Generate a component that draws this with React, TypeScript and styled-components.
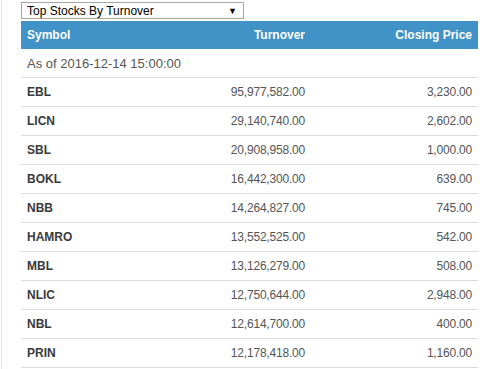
import styled, {createGlobalStyle} from 'styled-components'

const rows = [
    {symbol: 'EBL', turnover: '95,977,582.00', price: '3,230.00'},
    {symbol: 'LICN', turnover: '29,140,740.00', price: '2,602.00'},
    {symbol: 'SBL', turnover: '20,908,958.00', price: '1,000.00'},
    {symbol: 'BOKL', turnover: '16,442,300.00', price: '639.00'},
    {symbol: 'NBB', turnover: '14,264,827.00', price: '745.00'},
    {symbol: 'HAMRO', turnover: '13,552,525.00', price: '542.00'},
    {symbol: 'MBL', turnover: '13,126,279.00', price: '508.00'},
    {symbol: 'NLIC', turnover: '12,750,644.00', price: '2,948.00'},
    {symbol: 'NBL', turnover: '12,614,700.00', price: '400.00'},
    {symbol: 'PRIN', turnover: '12,178,418.00', price: '1,160.00'},
]

function App() {
    return (
        <>
            <GlobalStyle/>
            <Page>
                <Picker>
                    <span>Top Stocks By Turnover</span>
                    <Arrow>▼</Arrow>
                </Picker>
                <Table>
                    <thead>
                    <tr>
                        <Th>Symbol</Th>
                        <Th $right>Turnover</Th>
                        <Th $right>Closing Price</Th>
                    </tr>
                    </thead>
                    <tbody>
                    <tr>
                        <AsOf colSpan={3}>As of 2016-12-14 15:00:00</AsOf>
                    </tr>
                    {rows.map((row) => (
                        <tr key={row.symbol}>
                            <Symbol>{row.symbol}</Symbol>
                            <Num>{row.turnover}</Num>
                            <Num>{row.price}</Num>
                        </tr>
                    ))}
                    </tbody>
                </Table>
            </Page>
        </>
    )
}

const GlobalStyle = createGlobalStyle`
  body {
    margin: 0;
    background: #fff;
    font-family: "Liberation Sans", Arial, sans-serif;
  }
`

const Page = styled.div`
  margin-left: 1px;
  border-left: 1px solid #e3e3e3;
  padding: 2px 7px 0 19px;
  height: 369px;
  box-sizing: border-box;
  overflow: hidden;
`

const Picker = styled.div`
  width: 223px;
  height: 17px;
  box-sizing: border-box;
  border: 1px solid #a6a6a6;
  display: flex;
  align-items: center;
  justify-content: space-between;
  padding: 0 6px 0 5px;
  font-size: 12px;
  color: #000;
`

const Arrow = styled.span`
  font-size: 9px;
`

const Table = styled.table`
  width: 457px;
  margin-top: 2px;
  border-collapse: collapse;
`

const Th = styled.th<{ $right?: boolean }>`
  background: #4192c6;
  color: #fff;
  font-size: 12px;
  font-weight: bold;
  height: 28px;
  padding: 0 6px;
  text-align: ${(p) => (p.$right ? 'right' : 'left')};
`

const AsOf = styled.td`
  height: 28px;
  padding: 0 6px;
  font-size: 13px;
  color: #555;
  border-bottom: 1px solid #ddd;
`

const Symbol = styled.td`
  height: 28px;
  padding: 0 6px;
  font-size: 12px;
  font-weight: bold;
  color: #3a3a3a;
  border-bottom: 1px solid #ddd;
`

const Num = styled.td`
  height: 28px;
  padding: 0 6px;
  font-size: 12px;
  letter-spacing: -0.2px;
  color: #555;
  text-align: right;
  border-bottom: 1px solid #ddd;

  &:nth-child(2) {
    width: 160px;
  }
  &:nth-child(3) {
    width: 155px;
  }
`

export default App
